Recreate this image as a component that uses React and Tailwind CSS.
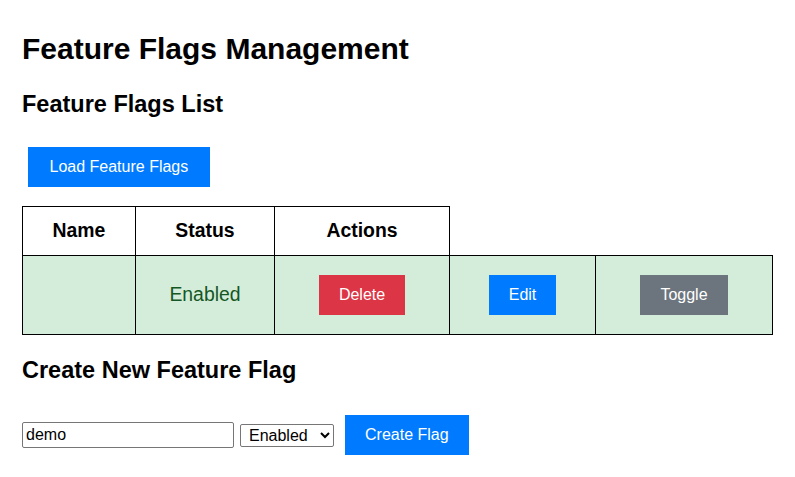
export default function App() {
  return (
    <div className="min-h-screen bg-white px-[22px] pt-[31px] text-black font-['Liberation_Sans',Arial,sans-serif]">
      <h1 className="text-[30px] leading-[36px] font-bold">Feature Flags Management</h1>
      <h2 className="mt-[23px] text-[23.5px] leading-[28px] font-bold">Feature Flags List</h2>

      <button className="mt-[29px] ml-[6px] h-[40px] px-[21.5px] bg-[#007bff] text-white text-[16px] leading-5">
        Load Feature Flags
      </button>

      <table className="mt-[19px] w-[750px] table-fixed border-collapse text-[19.4px]">
        <colgroup>
          <col className="w-[113px]" />
          <col className="w-[139px]" />
          <col className="w-[175px]" />
          <col className="w-[146px]" />
          <col className="w-[177px]" />
        </colgroup>
        <thead>
          <tr className="h-[49px]">
            <th className="border border-black font-bold text-center">Name</th>
            <th className="border border-black font-bold text-center">Status</th>
            <th className="border border-black font-bold text-center">Actions</th>
          </tr>
        </thead>
        <tbody>
          <tr className="h-[79px] bg-[#d4edda]">
            <td className="border border-black"></td>
            <td className="border border-black text-center text-[#155724]">Enabled</td>
            <td className="border border-black text-center">
              <button className="h-[40px] px-[20px] bg-[#dc3545] text-white text-[16px] leading-5 align-middle">Delete</button>
            </td>
            <td className="border border-black text-center">
              <button className="h-[40px] px-[20px] bg-[#007bff] text-white text-[16px] leading-5 align-middle">Edit</button>
            </td>
            <td className="border border-black text-center">
              <button className="h-[40px] px-[20px] bg-[#6c757d] text-white text-[16px] leading-5 align-middle">Toggle</button>
            </td>
          </tr>
        </tbody>
      </table>

      <h2 className="mt-[21px] text-[23.5px] leading-[28px] font-bold">Create New Feature Flag</h2>

      <div className="mt-[31px] flex items-center">
        <input
          type="text"
          defaultValue="demo"
          className="w-[212px] h-[26px] border border-[#767676] rounded-[2px] px-[3px] text-[16px] text-black outline-none"
        />
        <select
          defaultValue="Enabled"
          className="ml-[6px] h-[23px] w-[94px] border border-[#767676] rounded-[2px] pl-[4px] text-[16px] text-black appearance-auto bg-white"
        >
          <option>Enabled</option>
          <option>Disabled</option>
        </select>
        <button className="ml-[11px] h-[40px] px-[20px] bg-[#007bff] text-white text-[16px] leading-5">
          Create Flag
        </button>
      </div>
    </div>
  );
}
